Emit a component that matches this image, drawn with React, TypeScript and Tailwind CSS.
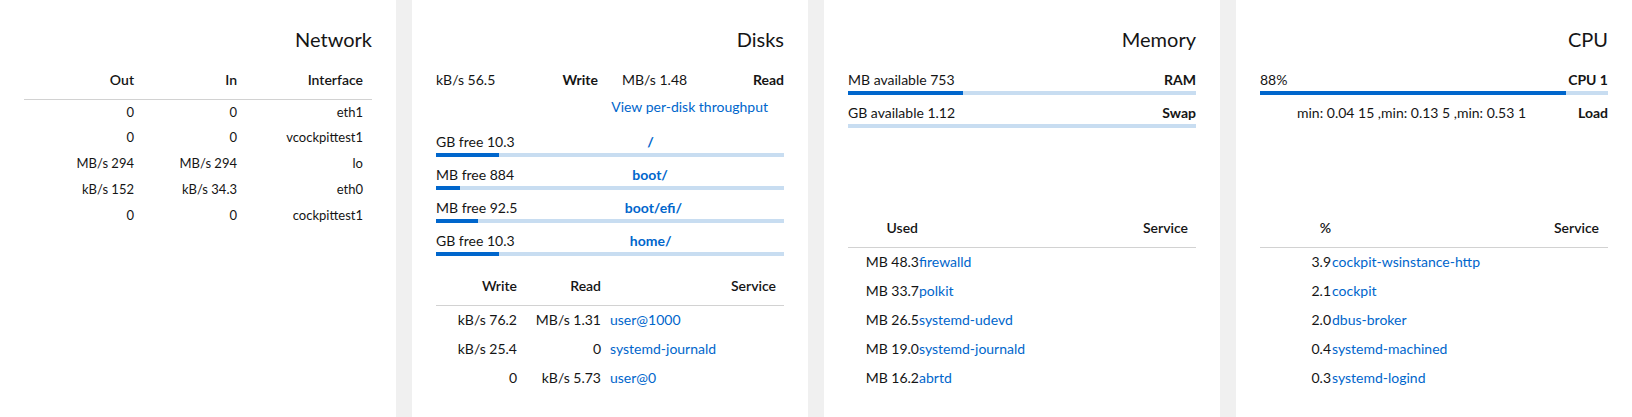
import React from "react";

const netRows = [
    { out: "0", inn: "0", iface: "eth1" },
    { out: "0", inn: "0", iface: "vcockpittest1" },
    { out: "MB/s 294", inn: "MB/s 294", iface: "lo" },
    { out: "kB/s 152", inn: "kB/s 34.3", iface: "eth0" },
    { out: "0", inn: "0", iface: "cockpittest1" },
];

const disks = [
    { free: "GB free 10.3", name: "/", pct: 18 },
    { free: "MB free 884", name: "boot/", pct: 7 },
    { free: "MB free 92.5", name: "boot/efi/", pct: 12 },
    { free: "GB free 10.3", name: "home/", pct: 18 },
];

const diskServices = [
    { write: "kB/s 76.2", read: "MB/s 1.31", name: "user@1000" },
    { write: "kB/s 25.4", read: "0", name: "systemd-journald" },
    { write: "0", read: "kB/s 5.73", name: "user@0" },
];

const memServices = [
    { used: "MB 48.3", name: "firewalld" },
    { used: "MB 33.7", name: "polkit" },
    { used: "MB 26.5", name: "systemd-udevd" },
    { used: "MB 19.0", name: "systemd-journald" },
    { used: "MB 16.2", name: "abrtd" },
];

const cpuServices = [
    { pct: "3.9", name: "cockpit-wsinstance-http" },
    { pct: "2.1", name: "cockpit" },
    { pct: "2.0", name: "dbus-broker" },
    { pct: "0.4", name: "systemd-machined" },
    { pct: "0.3", name: "systemd-logind" },
];

const Bar: React.FC<{ pct: number }> = ({ pct }) => (
    <div className="mt-px h-1 w-full bg-[#c8ddf1]">
        <div className="h-full bg-[#0066cc]" style={{ width: `${pct}%` }} />
    </div>
);

const Card: React.FC<{ title: string; children: React.ReactNode }> = ({ title, children }) => (
    <section className="w-[396px] shrink-0 bg-white flex flex-col pt-[26px] px-6 pb-[25px]">
        <h2 className="text-right text-[20px] leading-[26px]">{title}</h2>
        {children}
    </section>
);

const BarItem: React.FC<{ left: string; right: string; pct: number }> = ({ left, right, pct }) => (
    <div>
        <div className="flex justify-between text-sm leading-5 whitespace-nowrap">
            <span>{left}</span>
            <span className="font-bold">{right}</span>
        </div>
        <Bar pct={pct} />
    </div>
);

const App: React.FC = () => {
    return (
        <div className="flex gap-4 h-[417px] w-[1632px] overflow-hidden bg-[#f0f0f0] text-[#151515] font-['Lato',sans-serif]">
            <Card title="Network">
                <table className="mt-[9px] w-full table-fixed border-collapse">
                    <colgroup>
                        <col className="w-[119px]" />
                        <col className="w-[103px]" />
                        <col />
                    </colgroup>
                    <thead>
                        <tr className="h-[38px] border-b border-[#d2d2d2] text-sm">
                            <th className="text-right pr-[9px] font-semibold">Out</th>
                            <th className="text-right pr-[9px] font-semibold">In</th>
                            <th className="text-right pr-[9px] font-semibold">Interface</th>
                        </tr>
                    </thead>
                    <tbody>
                        {netRows.map((r) => (
                            <tr key={r.iface} className="h-[26px] text-[13px]">
                                <td className="text-right pr-[9px]">{r.out}</td>
                                <td className="text-right pr-[9px]">{r.inn}</td>
                                <td className="text-right pr-[9px]">{r.iface}</td>
                            </tr>
                        ))}
                    </tbody>
                </table>
            </Card>

            <Card title="Disks">
                <div className="mt-[18px] grid grid-cols-2 gap-x-6 text-sm leading-5 whitespace-nowrap">
                    <div className="flex justify-between">
                        <span>kB/s 56.5</span>
                        <span className="font-bold">Write</span>
                    </div>
                    <div className="flex justify-between">
                        <span>MB/s 1.48</span>
                        <span className="font-bold">Read</span>
                    </div>
                </div>
                <div className="mt-[7px] text-right pr-4 text-sm leading-5">
                    <a className="text-[#0066cc]">View per-disk throughput</a>
                </div>
                <div className="mt-[15px] flex flex-col gap-2">
                    {disks.map((d, i) => (
                        <div key={i}>
                            <div className="flex justify-between text-sm leading-5 whitespace-nowrap">
                                <span>{d.free}</span>
                                <a className="w-[272px] shrink-0 text-center font-bold text-[#0066cc]">{d.name}</a>
                            </div>
                            <Bar pct={d.pct} />
                        </div>
                    ))}
                </div>
                <table className="mt-auto w-full table-fixed border-collapse text-sm">
                    <colgroup>
                        <col className="w-[89px]" />
                        <col className="w-[84px]" />
                        <col />
                    </colgroup>
                    <thead>
                        <tr className="h-[38px] border-b border-[#d2d2d2]">
                            <th className="text-right pr-2 font-semibold">Write</th>
                            <th className="text-right pr-2 font-semibold">Read</th>
                            <th className="text-right pr-2 font-semibold">Service</th>
                        </tr>
                    </thead>
                    <tbody>
                        {diskServices.map((s) => (
                            <tr key={s.name} className="h-[29px]">
                                <td className="text-right pr-2">{s.write}</td>
                                <td className="text-right pr-2">{s.read}</td>
                                <td className="text-left pl-px">
                                    <a className="text-[#0066cc]">{s.name}</a>
                                </td>
                            </tr>
                        ))}
                    </tbody>
                </table>
            </Card>

            <Card title="Memory">
                <div className="mt-[18px] flex flex-col gap-2">
                    <BarItem left="MB available 753" right="RAM" pct={33} />
                    <BarItem left="GB available 1.12" right="Swap" pct={0} />
                </div>
                <table className="mt-auto w-full table-fixed border-collapse text-sm">
                    <colgroup>
                        <col className="w-[71px]" />
                        <col />
                    </colgroup>
                    <thead>
                        <tr className="h-[38px] border-b border-[#d2d2d2]">
                            <th className="text-right pr-px font-semibold">Used</th>
                            <th className="text-right pr-2 font-semibold">Service</th>
                        </tr>
                    </thead>
                    <tbody>
                        {memServices.map((s) => (
                            <tr key={s.name} className="h-[29px]">
                                <td className="text-right">{s.used}</td>
                                <td className="text-left">
                                    <a className="text-[#0066cc]">{s.name}</a>
                                </td>
                            </tr>
                        ))}
                    </tbody>
                </table>
            </Card>

            <Card title="CPU">
                <div className="mt-[18px] flex flex-col gap-2">
                    <BarItem left="88%" right="CPU 1" pct={88} />
                    <div className="flex text-sm leading-5 pl-[37px] whitespace-nowrap">
                        <span>min: 0.04 15 ,min: 0.13 5 ,min: 0.53 1</span>
                        <span className="ml-auto font-bold">Load</span>
                    </div>
                </div>
                <table className="mt-auto w-full table-fixed border-collapse text-sm">
                    <colgroup>
                        <col className="w-[71px]" />
                        <col />
                    </colgroup>
                    <thead>
                        <tr className="h-[38px] border-b border-[#d2d2d2]">
                            <th className="text-right font-semibold">%</th>
                            <th className="text-right pr-[9px] font-semibold">Service</th>
                        </tr>
                    </thead>
                    <tbody>
                        {cpuServices.map((s) => (
                            <tr key={s.name} className="h-[29px]">
                                <td className="text-right">{s.pct}</td>
                                <td className="text-left pl-px">
                                    <a className="text-[#0066cc]">{s.name}</a>
                                </td>
                            </tr>
                        ))}
                    </tbody>
                </table>
            </Card>
        </div>
    );
};

export default App;
